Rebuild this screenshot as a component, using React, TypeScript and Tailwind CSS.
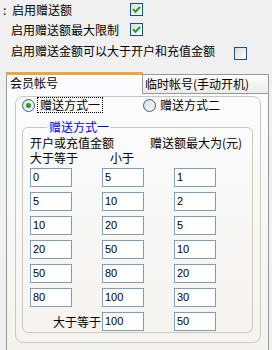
import React from "react";

const rows = [
  ["0", "5", "1"],
  ["5", "10", "2"],
  ["10", "20", "5"],
  ["20", "50", "10"],
  ["50", "80", "20"],
  ["80", "100", "30"],
];

function CheckBox({ checked }: { checked?: boolean }) {
  return (
    <span className="flex h-[13px] w-[13px] shrink-0 items-center justify-center border border-[#1c5180] bg-gradient-to-br from-[#dcdcd7] to-white">
      {checked && (
        <svg width="9" height="9" viewBox="0 0 9 9">
          <path d="M1 4.2 L3.5 6.7 L8 2" fill="none" stroke="#21a121" strokeWidth="2" />
        </svg>
      )}
    </span>
  );
}

function Radio({ checked }: { checked?: boolean }) {
  return (
    <span className="flex h-[13px] w-[13px] shrink-0 items-center justify-center rounded-full border border-[#2f5a8d] bg-gradient-to-br from-[#dcdcd7] to-white">
      {checked && <span className="h-[5px] w-[5px] rounded-full bg-[#21a121]" />}
    </span>
  );
}

function Field({ value }: { value: string }) {
  return (
    <div className="h-[19px] w-[42px] border border-[#7f9db9] bg-white pl-[2px] font-['Liberation_Sans',sans-serif] text-[11px] leading-[17px]">
      {value}
    </div>
  );
}

export default function App() {
  return (
    <div className="h-[350px] w-[272px] overflow-hidden bg-[#f0f0f0] font-['Noto_Sans_CJK_SC',sans-serif] text-[12px] leading-[12px] text-black">
      {/* 상단 체크 옵션 */}
      <div className="h-[72px] pt-[3px]">
        <div className="flex h-[13px] items-center">
          <span className="w-[12px] pl-[3px]">:</span>
          <span className="w-[118px]">启用赠送额</span>
          <CheckBox checked />
        </div>
        <div className="mt-[7px] flex h-[13px] items-center pl-[11px]">
          <span className="w-[119px]">启用赠送额最大限制</span>
          <CheckBox checked />
        </div>
        <div className="mt-[8px] flex items-start pl-[11px]">
          <span className="w-[223px] leading-[13px]">启用赠送金额可以大于开户和充值金额</span>
          <span className="mt-[3px]">
            <CheckBox />
          </span>
        </div>
      </div>

      {/* 탭 */}
      <div className="ml-[6px] w-[263px]">
        <div className="flex h-[21px] items-end">
          <div className="relative z-10 -mb-px h-[22px] w-[137px] border-x border-t-[3px] border-x-[#919b9c] border-t-[#eda63a] bg-[#fcfcfe] pl-[3px] pt-[2px]">
            会员帐号
          </div>
          <div className="h-[19px] w-[126px] border-r border-t border-[#919b9c] bg-gradient-to-b from-white to-[#ecebe6] pl-[2px] pt-[3px]">
            临时帐号(手动开机)
          </div>
        </div>
        <div className="h-[260px] border border-[#919b9c] bg-gradient-to-b from-[#fcfcfe] to-[#f4f3ee] pl-[8px] pr-[7px] pt-[2px]">
          <div className="h-[247px] rounded-[8px] border border-[#c9c8bd]">
            <div className="flex h-[16px] items-center pl-[6px]">
              <Radio checked />
              <span className="ml-[2px] border border-dotted border-black px-[2px] py-[1px]">赠送方式一</span>
              <span className="ml-[40px]">
                <Radio />
              </span>
              <span className="ml-[4px]">赠送方式二</span>
            </div>
            <fieldset className="ml-[6px] mr-[7px] mt-[8px] h-[212px] rounded-[6px] border border-[#c9c8bd] pl-[7px]">
              <legend className="ml-[17px] px-[2px] leading-[12px] text-[#0000ff]">赠送方式一</legend>
              <div className="mt-[4px] flex">
                <span className="w-[120px]">开户或充值金额</span>
                <span>赠送额最大为(元)</span>
              </div>
              <div className="mt-[3px] flex">
                <span className="w-[80px]">大于等于</span>
                <span>小于</span>
              </div>
              <div className="mt-[4px] grid grid-cols-[42px_42px_42px] gap-x-[30px] gap-y-[5px]">
                {rows.map((r) => (
                  <React.Fragment key={r[0]}>
                    <Field value={r[0]} />
                    <Field value={r[1]} />
                    <Field value={r[2]} />
                  </React.Fragment>
                ))}
                <span className="-mr-[29px] self-center justify-self-end whitespace-nowrap">大于等于</span>
                <Field value="100" />
                <Field value="50" />
              </div>
            </fieldset>
          </div>
        </div>
      </div>
    </div>
  );
}
